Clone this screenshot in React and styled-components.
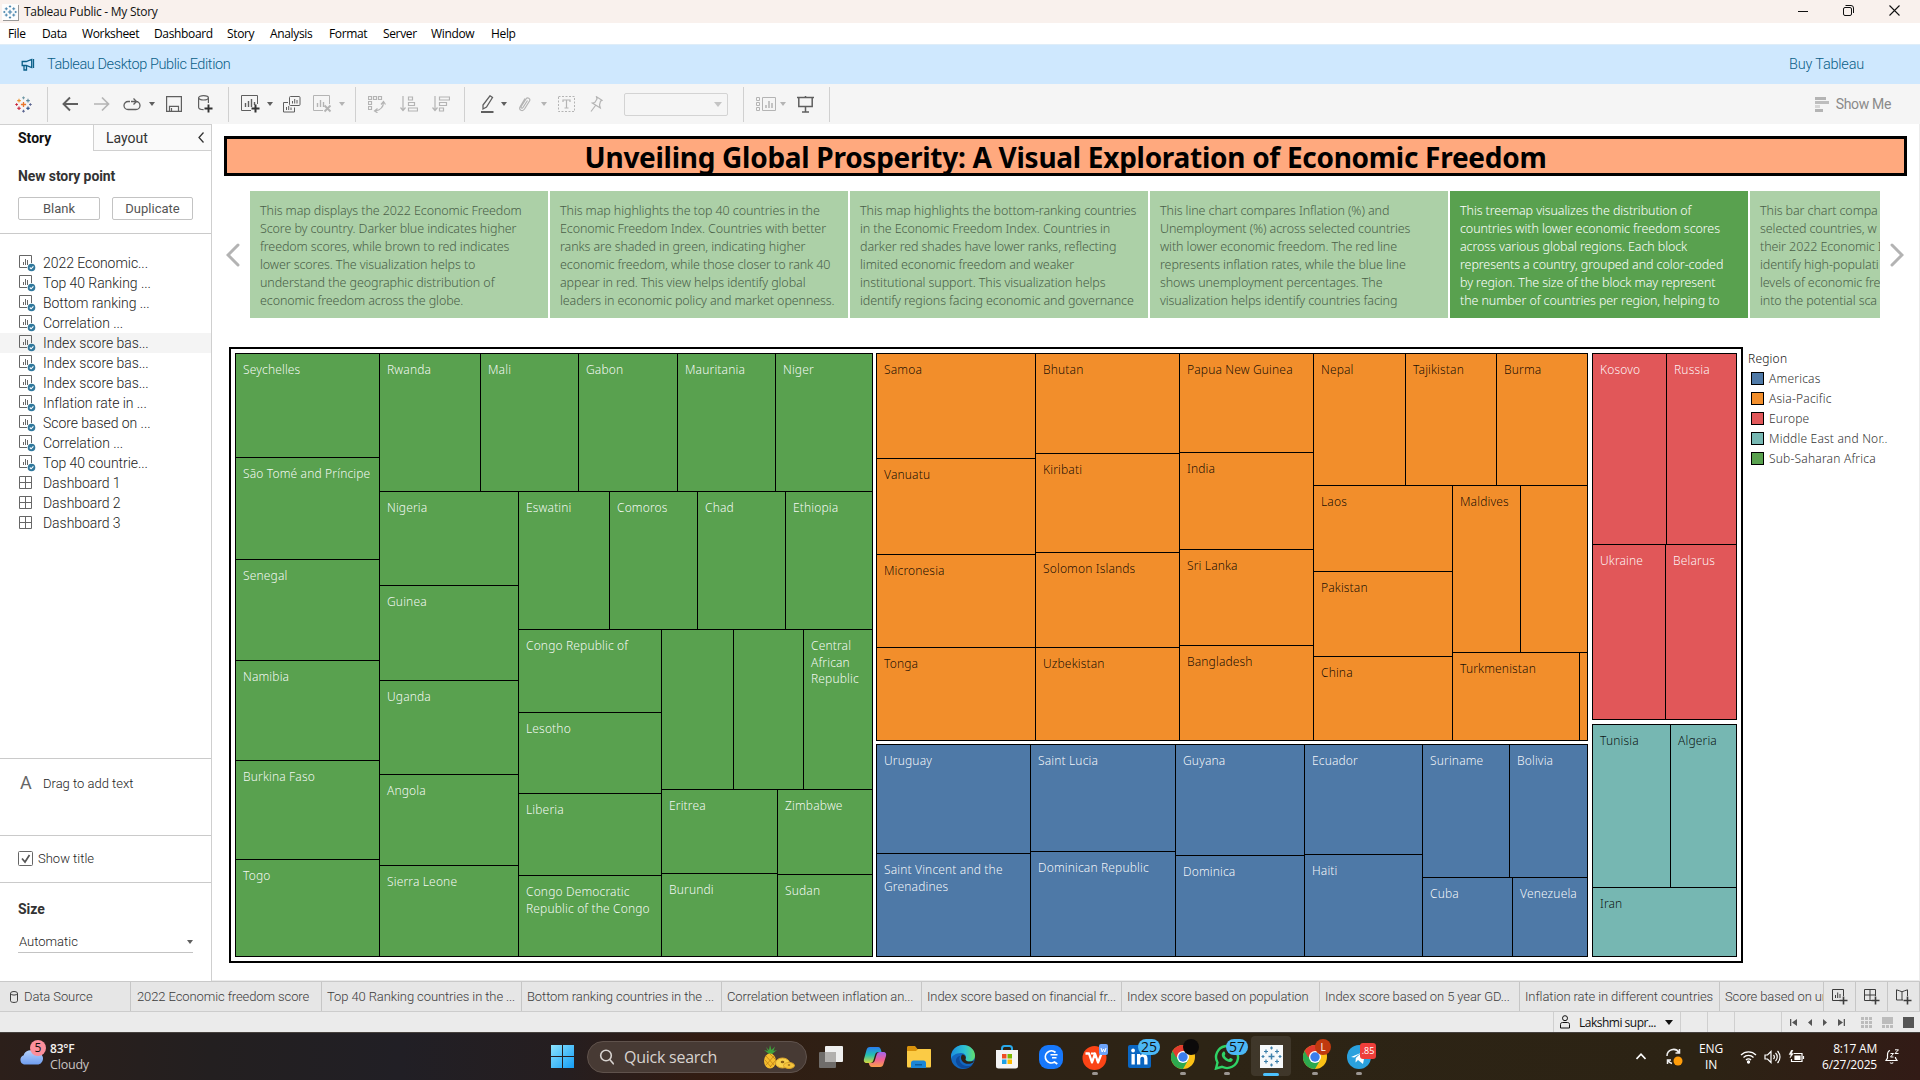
import React from "react";
import styled, { createGlobalStyle } from "styled-components";

const GlobalStyle = createGlobalStyle`
  * { box-sizing: border-box; }
  body { margin: 0; background: #fff; overflow: hidden; }
  svg { display: block; flex: none; }
`;

const UI = `Roboto, "Liberation Sans", sans-serif`;
const BOOK = `"Noto Sans", "Open Sans", sans-serif`;
const SEGOE = `"Open Sans", "Noto Sans", sans-serif`;

const C = {
  green: "#59a14f",
  orange: "#f28e2b",
  red: "#e15759",
  teal: "#76b7b2",
  blue: "#4e79a7",
};

/* ---------- window frame ---------- */

const Screen = styled.div`
  width: 1920px;
  height: 1080px;
  display: flex;
  flex-direction: column;
  overflow: hidden;
  font-family: ${UI};
  color: #333;
`;

const TitleBar = styled.header`
  height: 23px;
  flex: none;
  display: flex;
  align-items: center;
  background: #f9f1ed;
  padding: 0 20px 0 2px;
  font: 12px/22px ${SEGOE};
  letter-spacing: -0.27px;
  color: #111;
`;

const AppBadge = styled.span`
  width: 16px;
  height: 16px;
  background: #fdfdfd;
  box-shadow: 1px 1px 0 #999;
  margin-right: 6px;
  display: flex;
  align-items: center;
  justify-content: center;
`;

const WindowButtons = styled.div`
  margin-left: auto;
  display: flex;
  align-items: center;
  gap: 35px;
  padding-bottom: 2px;
`;

const MenuBar = styled.nav`
  height: 21px;
  flex: none;
  display: flex;
  gap: 16px;
  padding-left: 8px;
  font: 12px/21px ${SEGOE};
  color: #000;
  background: #fff;
`;

const MenuItem = styled.span`
  width: ${(p) => p.$w}px;
  letter-spacing: -0.35px;
  white-space: nowrap;
`;

const Banner = styled.div`
  height: 40px;
  flex: none;
  display: flex;
  align-items: center;
  background: #cfe8fe;
  border-top: 1px solid #dfedf8;
  padding: 0 56px 0 21px;
  font-size: 14.5px;
  font-weight: 300;
  color: #0a5f88;
`;

const BannerText = styled.span`
  margin-left: 12px;
  letter-spacing: -0.4px;
`;

const BuyLink = styled.span`
  margin-left: auto;
  letter-spacing: -0.2px;
`;

/* ---------- toolbar ---------- */

const Toolbar = styled.div`
  height: 40px;
  flex: none;
  display: flex;
  align-items: center;
  background: #f5f5f5;
  padding-right: 29px;
`;

const Tool = styled.span`
  margin-left: ${(p) => p.$gap}px;
  display: flex;
  color: ${(p) => (p.$off ? "#b4b4b4" : "#5f5f5f")};
`;

const Separator = styled.i`
  width: 1px;
  height: 35px;
  margin-left: ${(p) => p.$gap}px;
  background: #d0d0d0;
`;

const Caret = styled.i`
  margin-left: ${(p) => p.$gap || 0}px;
  width: 0;
  height: 0;
  flex: none;
  border: ${(p) => p.$s || 3}px solid transparent;
  border-top: ${(p) => (p.$s || 3) + 1}px solid ${(p) => p.$c || "#5f5f5f"};
  border-bottom: 0;
`;

const FitSelect = styled.span`
  margin-left: 21px;
  width: 104px;
  height: 23px;
  border: 1px solid #d3d3d3;
  border-radius: 2px;
  display: flex;
  align-items: center;
  justify-content: flex-end;
  padding-right: 5px;
`;

const ShowMe = styled.span`
  margin-left: auto;
  display: flex;
  align-items: center;
  gap: 6px;
  font-size: 14px;
  letter-spacing: -0.35px;
  color: #8a8a8a;
`;

/* ---------- body ---------- */

const Body = styled.div`
  height: 857px;
  flex: none;
  display: flex;
`;

const Sidebar = styled.aside`
  width: 212px;
  flex: none;
  border-right: 1px solid #cfcfcf;
  display: flex;
  flex-direction: column;
  font-size: 13px;
`;

const PaneTabs = styled.div`
  height: 27px;
  display: flex;
  font-size: 14px;
  line-height: 26px;
`;

const PaneTab = styled.div`
  width: ${(p) => (p.$active ? 93 : 118)}px;
  padding-left: ${(p) => (p.$active ? 18 : 12)}px;
  font-weight: ${(p) => (p.$active ? 700 : 400)};
  color: ${(p) => (p.$active ? "#111" : "#333")};
  border-top: 1px solid #d0d0d0;
  ${(p) =>
    !p.$active &&
    `background:#fafafa;border-left:1px solid #d0d0d0;border-bottom:1px solid #d0d0d0;
     display:flex;align-items:center;justify-content:space-between;padding-right:6px;`}
`;

const PaneSection = styled.section`
  height: ${(p) => p.$h}px;
  border-bottom: ${(p) => (p.$last ? 0 : 1)}px solid #cacaca;
  padding: ${(p) => p.$pad || "0 18px"};
`;

const PaneHeading = styled.h4`
  margin: 0;
  font-size: 14px;
  font-weight: 700;
  line-height: 18px;
  letter-spacing: ${(p) => p.$ls || 0}px;
  color: #333;
`;

const ButtonRow = styled.div`
  display: flex;
  gap: 12px;
  margin-top: 12px;
`;

const PaneButton = styled.button`
  width: ${(p) => p.$w}px;
  height: 23px;
  border: 1px solid #c3c3c3;
  border-radius: 2px;
  background: #fff;
  padding: 0 0 1px;
  font: 13px ${UI};
  color: #555;
`;

const SheetItem = styled.div`
  height: 20px;
  display: flex;
  align-items: center;
  gap: 7px;
  padding-left: 19px;
  background: ${(p) => (p.$active ? "#f4f4f4" : "none")};
  font-size: 14px;
  font-weight: 300;
  letter-spacing: -0.05px;
  color: #1c1c1c;
  white-space: pre;
`;

const TextRow = styled.div`
  display: flex;
  align-items: center;
  gap: ${(p) => p.$gap}px;
  letter-spacing: ${(p) => p.$ls || 0}px;
  font-weight: 300;
  color: #1c1c1c;
`;

const LetterIcon = styled.span`
  width: 12px;
  font-size: 18px;
  font-weight: 400;
  line-height: 20px;
  color: #666;
`;

const SizeSelect = styled.div`
  margin-top: 13px;
  width: 175px;
  height: 22px;
  border-bottom: 1px solid #c3c3c3;
  display: flex;
  align-items: center;
  justify-content: space-between;
  padding-left: 1px;
  font-weight: 300;
  color: #1c1c1c;
`;

/* ---------- story canvas ---------- */

const Canvas = styled.main`
  flex: 1;
  min-width: 0;
  display: flex;
  flex-direction: column;
  padding: 12px 12px 0 12px;
  border-right: 1px solid #ececec;
  border-bottom: 1px solid #ececec;
  font-family: ${BOOK};
`;

const StoryTitle = styled.h1`
  margin: 0;
  height: 40px;
  flex: none;
  border: 3px solid #000;
  border-width: 3px;
  background: #ffa97e;
  text-align: center;
  font-size: 28px;
  font-weight: 700;
  line-height: 36px;
  letter-spacing: -0.28px;
  color: #000;
  white-space: nowrap;
`;

const Navigator = styled.div`
  margin-top: 15px;
  height: 127px;
  flex: none;
  display: flex;
  align-items: center;
  padding: 0 3px 0 2px;
`;

const Captions = styled.div`
  margin: 0 10px 0 10px;
  width: 1630px;
  height: 127px;
  flex: none;
  display: flex;
  gap: 2px;
  overflow: hidden;
`;

const Caption = styled.p`
  margin: 0;
  width: 298px;
  flex: none;
  padding: 11px 0 0 10px;
  background: ${(p) => (p.$active ? C.green : "#acd0a7")};
  color: ${(p) => (p.$active ? "#fff" : "#4a5f48")};
  font-size: 12.5px;
  font-weight: 300;
  line-height: 18px;
  letter-spacing: -0.1px;
  white-space: pre;
`;

const Sheet = styled.div`
  margin: 29px 0 0 5px;
  display: flex;
`;

const VizFrame = styled.div`
  width: 1514px;
  height: 616px;
  border: 2px solid #000;
  padding: 4px;
  display: flex;
`;

const Column = styled.div`
  width: ${(p) => p.$w}px;
  margin-right: ${(p) => p.$mr || 0}px;
  display: flex;
  flex-direction: column;
  justify-content: space-between;
`;

const Region = styled.div`
  height: ${(p) => p.$h}px;
  padding: 1px;
  background: #000;
  display: flex;
  color: ${(p) => (p.$dark ? "rgba(0,0,0,.9)" : "rgba(255,255,255,.95)")};
`;

const Split = styled.div`
  flex: ${(p) => (p.$size ? `0 0 ${p.$size}px` : "1 1 0")};
  min-width: 0;
  min-height: 0;
  display: flex;
  flex-direction: ${(p) => (p.$dir === "V" ? "column" : "row")};
  gap: 1px;
`;

const Cell = styled.div`
  flex: ${(p) => (p.$size ? `0 0 ${p.$size}px` : "1 1 0")};
  min-width: 0;
  min-height: 0;
  background: ${(p) => p.$fill};
  padding: 8px 0 0 7px;
  font-size: 12px;
  font-weight: 300;
  line-height: 16.7px;
  letter-spacing: 0.15px;
  white-space: pre;
`;

const Legend = styled.div`
  padding: 3px 0 0 5px;
  font-size: 12px;
  font-weight: 300;
  letter-spacing: 0.2px;
  color: #333;
`;

const LegendTitle = styled.div`
  line-height: 18px;
  height: 18px;
  color: #111;
`;

const LegendRow = styled.div`
  height: 20px;
  display: flex;
  align-items: center;
  gap: 5px;
  padding-left: 3px;
`;

const Swatch = styled.i`
  width: 13px;
  height: 13px;
  border: 1px solid #000;
  background: ${(p) => p.$c};
`;

/* ---------- bottom tabs + status ---------- */

const TabBar = styled.div`
  height: 31px;
  flex: none;
  display: flex;
  border-top: 1px solid #c9c9c9;
  border-bottom: 1px solid #cccccc;
  background: #e6e6e6;
  font-size: 13px;
  font-weight: 300;
  color: #3c3c3c;
`;

const SheetTab = styled.div`
  width: ${(p) => p.$w}px;
  flex: none;
  border-right: 1px solid #c6c6c6;
  padding-left: ${(p) => p.$pl || 6}px;
  display: flex;
  align-items: center;
  gap: 6px;
  letter-spacing: -0.1px;
  white-space: nowrap;
  overflow: hidden;
`;

const NewTab = styled.div`
  width: 32px;
  border-right: 1px solid #c6c6c6;
  display: flex;
  align-items: center;
  justify-content: center;
`;

const StatusBar = styled.div`
  height: 20px;
  flex: none;
  display: flex;
  justify-content: flex-end;
  background: #ebebeb;
  font: 12px/19px ${SEGOE};
  color: #111;
`;

const StatusCell = styled.div`
  width: ${(p) => p.$w}px;
  border-left: 1px solid #cfcfcf;
  padding-left: ${(p) => p.$pl || 0}px;
  display: flex;
  align-items: center;
  gap: ${(p) => p.$gap || 0}px;
  letter-spacing: -0.5px;
`;

/* ---------- taskbar ---------- */

const Taskbar = styled.footer`
  height: 48px;
  flex: none;
  display: flex;
  align-items: center;
  border-top: 1px solid #45403d;
  background: linear-gradient(90deg, #2c1f1a 0, #231f20 210px, #211f25 400px, #251e20 560px, #321c12 700px, #2d2115 900px, #2d2415 1200px, #2c2314 1700px, #321b16 1920px);
  font-family: ${SEGOE};
  color: #f3f0ee;
`;

const Weather = styled.div`
  width: 551px;
  display: flex;
  align-items: center;
  padding-left: 19px;
  gap: 7px;
  font-size: 12px;
  line-height: 16px;
  letter-spacing: -0.2px;
`;

const CloudBox = styled.div`
  position: relative;
  width: 24px;
  height: 30px;
  display: flex;
  align-items: center;
`;

const Count = styled.span`
  position: absolute;
  top: ${(p) => p.$top}px;
  left: ${(p) => p.$left}px;
  min-width: 16px;
  height: 16px;
  padding: 0 ${(p) => p.$px || 0}px;
  border-radius: ${(p) => (p.$square ? 3 : 9)}px;
  background: ${(p) => p.$bg};
  color: ${(p) => p.$fg || "#111"};
  font: ${(p) => p.$fs || 12}px/16px ${SEGOE};
  letter-spacing: 0;
  text-align: center;
`;

const WeatherText = styled.div`
  span { display: block; color: #c9c4c2; font-size: 12.5px; }
  b { font-weight: 600; font-size: 12px; }
`;

const SearchPill = styled.div`
  margin-left: 13px;
  width: 220px;
  height: 32px;
  border-radius: 16px;
  border: 1px solid #5f524c;
  background: #473a34;
  display: flex;
  align-items: center;
  padding: 0 11px;
  gap: 10px;
  font-size: 16px;
  letter-spacing: -0.25px;
  color: #d8d3d0;
  svg:last-child { margin-left: auto; }
`;

const Apps = styled.div`
  margin-left: 2px;
  display: flex;
`;

const AppSlot = styled.div`
  position: relative;
  width: 44px;
  height: 47px;
  display: flex;
  align-items: center;
  justify-content: center;
  ${(p) =>
    p.$active &&
    `&::before{content:"";position:absolute;inset:3px 2px 4px;border-radius:4px;background:rgba(255,255,255,.09);}`}
  ${(p) =>
    p.$running &&
    `&::after{content:"";position:absolute;bottom:${p.$active ? 4 : 5}px;left:50%;
      width:${p.$active ? 16 : 6}px;height:3px;border-radius:2px;transform:translateX(-50%);
      background:${p.$active ? "#4cc2ff" : "#9b9692"};}`}
  svg { position: relative; }
`;

const Tray = styled.div`
  margin-left: auto;
  padding-right: 21px;
  display: flex;
  align-items: center;
  font-size: 12px;
  line-height: 16px;
  color: #fff;
`;

const TrayText = styled.div`
  width: ${(p) => p.$w}px;
  text-align: ${(p) => p.$align || "center"};
  letter-spacing: -0.2px;
`;

const TrayIcon = styled.span`
  margin-left: ${(p) => p.$gap}px;
`;

/* ---------- icons ---------- */

const S = ({ w = 16, h = w, sw = 1, children, vb }) => (
  <svg width={w} height={h} viewBox={vb || `0 0 ${w} ${h}`} fill="none" stroke="currentColor" strokeWidth={sw}>
    {children}
  </svg>
);

const plus = (x, y, r) => `M${x - r} ${y}h${2 * r}M${x} ${y - r}v${2 * r}`;

const TableauMark = ({ size = 17, mono }) => {
  const c = mono
    ? Array(9).fill("#3f7ea8")
    : ["#e8762c", "#c72037", "#1f457e", "#5b6591", "#eb912c", "#59879b", "#7199a6", "#c72037", "#5b6591"];
  return (
    <svg width={size} height={size} viewBox="0 0 17 17" fill="none" strokeWidth="1.1">
      <path d={plus(8.5, 8.5, 2.6)} stroke={c[0]} strokeWidth="1.3" />
      <path d={plus(4, 12.2, 1.8)} stroke={c[1]} />
      <path d={plus(13, 12.2, 1.8)} stroke={c[2]} />
      <path d={plus(4, 4.6, 1.8)} stroke={c[4]} />
      <path d={plus(13, 4.6, 1.8)} stroke={c[5]} />
      <path d={plus(8.5, 1.8, 1.4)} stroke={c[6]} />
      <path d={plus(8.5, 15.2, 1.4)} stroke={c[8]} />
      <path d={plus(1.6, 8.5, 1.3)} stroke={c[7]} />
      <path d={plus(15.4, 8.5, 1.3)} stroke={c[3]} />
    </svg>
  );
};

const Megaphone = () => (
  <S w={14} h={13} sw={1.3}>
    <path d="M1.200 3.500h4l5.500-2v8l-5.500-2h-4zM3 7.500v4.500h2.500V7.500M12.500 1v9" />
  </S>
);

const NewSheetIcon = () => (
  <S w={19} h={18}>
    <path d="M10 15.500H.5V.5h16V9" />
    <path d="M4.500 12V8M7.500 12V6M10.500 12V4M13.500 10V7" strokeWidth="1.400" />
    <path d={plus(14.5, 13.5, 4)} strokeWidth="2" stroke="#333" />
  </S>
);
const ClearSheetIcon = () => (
  <S w={19} h={18}>
    <path d="M10 15.500H.5V.5h16V9" />
    <path d="M4.500 12V8M7.500 12V5M10.500 12V7" strokeWidth="1.400" />
    <path d="M11.500 10.500l6 6M17.500 10.500l-6 6" strokeWidth="1.900" />
  </S>
);
const DuplicateIcon = () => (
  <S w={18} h={17}>
    <rect x="6.500" y=".5" width="10.500" height="9" rx="1" />
    <path d="M9.500 7.500V5M11.700 7.500V3M14 7.500V4" />
    <path d="M5 6.500H.5V16h11v-4.500" />
    <path d="M3.500 14v-3M5.700 14v-4M8 14v-2.500" />
  </S>
);
const SwapIcon = () => (
  <S w={18} h={17} sw={1.2}>
    <path d="M.5.5h3v3h-3zM5.500.5h3v3h-3zM10.500.5h3v3h-3zM.5 5.500h3v3h-3zM.5 10.500h3v3h-3z" />
    <path d="M15.500 6c0 5-2.500 8-8.500 9M13 8.500L15.500 5.500 17.500 8.500M9.500 12.500L6.500 15l3 1.800" />
  </S>
);
const SortIcon = ({ asc }) => (
  <S w={18} h={16} sw={1.2}>
    <path d="M3 0v14M.5 11.500L3 14.500 5.500 11.500" />
    {asc ? (
      <path d="M8.500 1h4v3h-4zM8.500 6.500h6v3h-6zM8.500 12h9v3h-9z" />
    ) : (
      <path d="M7.500 1h10v3h-10zM7.500 6.500h7v3h-7zM7.500 12h4v3h-4z" />
    )}
  </S>
);
const Pen = () => (
  <S w={13} h={18}>
    <path d="M9 .8l2.500 1.700L5.500 12 2 14V10z" strokeWidth="1.300" />
    <path d="M0 17h12.500" strokeWidth="2" />
  </S>
);
const Clip = () => (
  <S w={13} h={16}>
    <path d="M9.500 4.500L5 11.500c-.8 1.200-2.500.2-1.800-1L8 3c1.500-2.300 4.800-.5 3.500 2L6.500 13c-2 3-6 1-4.500-2l5-8.500" strokeWidth="1.200" />
  </S>
);
const TextBox = () => (
  <S w={17} h={16}>
    <rect x=".5" y=".5" width="16" height="15" strokeDasharray="2 1.500" />
    <path d="M5 6V4h7v2M8.500 4v8M6.500 12h4" strokeWidth="1.200" />
  </S>
);
const Pin = () => (
  <S w={13} h={16}>
    <path d="M6.500.8l5.500 3.500-1.500.8L9.500 9l.8 3-8-5 2.500-.5L7 3zM5.500 9.500L1 15.500" strokeWidth="1.200" />
  </S>
);
const CardsIcon = () => (
  <S w={20} h={14}>
    <path d="M.5.5h3v3h-3zM.5 5.500h3v3h-3zM.5 10.500h3v3h-3zM6.500.5h13v13h-13z" />
    <path d="M10 11V8M13 11V4M16 11V6" strokeWidth="1.500" />
  </S>
);
const Present = () => (
  <S w={17} h={17} sw={1.5}>
    <path d="M0 1.500h17M1.800 1.500v9h13.400v-9M8.500 0v1M8.500 10.500V16M5 16h7" />
  </S>
);

const SheetIcon = () => (
  <svg width="17" height="17" viewBox="0 0 17 17" fill="none" stroke="#666">
    <path d="M8 12.500H.5V.5h12V8" />
    <path d="M4.500 10V7M6.500 10V4M8.500 10V5" />
    <circle cx="12.500" cy="12.500" r="3.800" fill="#31789c" stroke="none" />
    <path d="M10.800 12.500l1.300 1.300 2.300-2.500" stroke="#fff" strokeWidth="1.100" />
  </svg>
);
const DashIcon = () => (
  <svg width="17" height="16" viewBox="0 0 17 16" fill="none" stroke="#666">
    <path d="M.5 1.500h12v12H.5zM6.500 1.500v12M.5 7.500h12" />
  </svg>
);

const Chevron = ({ right }) => (
  <svg width="14" height="24" viewBox="0 0 14 24" fill="none" stroke="#b3b3b3" strokeWidth="3" strokeLinecap="round">
    <path d={right ? "M2 2l10 10L2 22" : "M12 2L2 12l10 10"} />
  </svg>
);

const Cloud = () => (
  <svg width="24" height="16" viewBox="0 0 24 16">
    <defs>
      <linearGradient id="cl" x1="0" y1="0" x2="0" y2="1">
        <stop offset="0" stopColor="#b6d2fb" />
        <stop offset="1" stopColor="#6f9df0" />
      </linearGradient>
    </defs>
    <path d="M5 15.500a4.800 4.800 0 0 1-.3-9.200A6.500 6.500 0 0 1 16 3.500a6 6 0 0 1 3.500 12z" fill="url(#cl)" />
  </svg>
);

const WinLogo = () => (
  <svg width="23" height="23" viewBox="0 0 23 23">
    <defs>
      <linearGradient id="wl" x1="0" y1="0" x2="1" y2="1">
        <stop offset="0" stopColor="#8be4fe" />
        <stop offset="1" stopColor="#149df5" />
      </linearGradient>
    </defs>
    <path d="M0 0h11v11H0zM12 0h11v11H12zM0 12h11v11H0zM12 12h11v11H12z" fill="url(#wl)" />
  </svg>
);

const Pineapple = () => (
  <svg width="32" height="24" viewBox="0 0 32 24">
    <path d="M6 9L1 5l4 1-2-4 3 3L7 0l1.500 5L12 1.500 10.500 6 14 5 9 9z" fill="#3fa13c" />
    <ellipse cx="7" cy="16" rx="6" ry="7.500" fill="#f5bd2d" />
    <path d="M3 11l8 9M2 15l6 7M7 9l6 6M11 11l-8 9M13 15l-6 7" stroke="#b97a12" strokeWidth=".7" />
    <ellipse cx="19.500" cy="18" rx="7" ry="5" fill="#f9d04a" stroke="#d9a22a" />
    <ellipse cx="19.500" cy="17" rx="1.800" ry="1.200" fill="#8a5f16" />
    <ellipse cx="26" cy="20.500" rx="5.500" ry="3" fill="#f6c53c" stroke="#d9a22a" />
    <ellipse cx="26" cy="20" rx="1.300" ry=".8" fill="#8a5f16" />
  </svg>
);

const TaskView = () => (
  <svg width="24" height="22" viewBox="0 0 24 22">
    <rect x="6" y="0" width="18" height="16" rx="1" fill="#efefef" />
    <rect x="0" y="6" width="17" height="16" rx="1" fill="#6f6c6a" />
    <path d="M6 6h11v10H6z" fill="#b2b0ae" />
  </svg>
);

const Copilot = () => (
  <svg width="24" height="24" viewBox="0 0 24 24">
    <defs>
      <linearGradient id="cp1" x1="0" y1="0" x2="0" y2="1">
        <stop offset="0" stopColor="#2a7cf0" />
        <stop offset=".5" stopColor="#24c0b0" />
        <stop offset="1" stopColor="#d7d83a" />
      </linearGradient>
      <linearGradient id="cp2" x1="0" y1="0" x2="0" y2="1">
        <stop offset="0" stopColor="#a066f0" />
        <stop offset=".5" stopColor="#ee5f96" />
        <stop offset="1" stopColor="#f9a04a" />
      </linearGradient>
    </defs>
    <path d="M7 2h8c2 0 2.500 1.500 3 3l.5 2h-3c-2 0-3 1-3.500 3l-1.500 5c-.6 2-1.500 3-3.500 3H4c-3 0-3.500-2-3-4L3.500 5C4 3 5 2 7 2z" fill="url(#cp1)" />
    <path d="M17 22H9c-2 0-2.500-1.500-3-3l-.3-1h2.800c2 0 3-1 3.500-3l1.500-5c.6-2 1.500-3 3.500-3h3c3 0 3.500 2 3 4l-2.500 8c-.500 2-1.500 3-3.500 3z" fill="url(#cp2)" />
  </svg>
);

const Folder = () => (
  <svg width="24" height="22" viewBox="0 0 24 22">
    <path d="M0 1.500C0 .7.500 0 1.500 0H8l2.500 3H24v4H0z" fill="#d9920c" />
    <path d="M0 5h9l2-2h11.500c1 0 1.500.6 1.500 1.500V20c0 1-.5 1.500-1.500 1.500h-21C.5 21.500 0 21 0 20z" fill="#fbcb45" />
    <path d="M4 22v-5c0-1.500 1-2.500 2.500-2.500h10c1.500 0 2.500 1 2.500 2.500v5z" fill="#1b86d8" />
    <path d="M8 18h7v1.500H8z" fill="#0c5c9f" />
  </svg>
);

const Edge = () => (
  <svg width="24" height="24" viewBox="0 0 24 24">
    <defs>
      <linearGradient id="eg" x1="0" y1="0" x2="1" y2="0">
        <stop offset="0" stopColor="#1b8fe0" />
        <stop offset=".6" stopColor="#2fc3d0" />
        <stop offset="1" stopColor="#63e06a" />
      </linearGradient>
    </defs>
    <circle cx="12" cy="12" r="12" fill="#1267c0" />
    <path d="M0 12C0 5 5.500 0 12 0c7 0 12 5 12 10.500 0 4-3 6-6 6s-4.500-1-3.500-2.500c1.500-2.500-.5-6-4.500-6-5 0-9.500 3-10 6z" fill="url(#eg)" />
    <path d="M9 11c-2 4 1 10 8 10 2 0 3.500-.5 5-1.500C19 24 8 26 5 17c-.6-3 1.500-6 4-6z" fill="#0d4a9b" />
    <path d="M11.500 9.500c-2 1-2.500 6 2 8.500 3 1.500 6.500.8 8.500-.500l1-2c-3 2-9 1-8.500-1.500.9-1.500 0-4-3-4.500z" fill="#2d2114" />
  </svg>
);

const Store = () => (
  <svg width="24" height="24" viewBox="0 0 24 24">
    <path d="M7 6V3.500C7 2 7.800 1 9.500 1h5C16.200 1 17 2 17 3.500V6" fill="none" stroke="#29a9ea" strokeWidth="2" />
    <path d="M1 5h22v16c0 1.800-.9 2.500-2.500 2.500h-17C1.900 23.500 1 22.800 1 21z" fill="#f4f4f4" />
    <path d="M7 9h4.500v4.500H7z" fill="#f04e23" />
    <path d="M12.500 9H17v4.500h-4.500z" fill="#7cb900" />
    <path d="M7 14.500h4.500V19H7z" fill="#1ba1e8" />
    <path d="M12.500 14.500H17V19h-4.500z" fill="#fdb900" />
  </svg>
);

const QuickApp = () => (
  <svg width="24" height="24" viewBox="0 0 24 24">
    <rect width="24" height="24" rx="9" fill="#1778fb" />
    <path d="M16.500 7.500A6 6 0 1 0 15.500 17l2.800 2" fill="none" stroke="#fff" strokeWidth="1.800" />
    <path d="M11.500 9.700h7M13 12.700h4.500" fill="none" stroke="#fff" strokeWidth="1.500" />
  </svg>
);

const Wps = () => (
  <svg width="28" height="28" viewBox="0 0 28 28">
    <circle cx="13.500" cy="15" r="12" fill="#fb4416" />
    <path d="M4.500 10.500h3.500l3 9 3-9 3 9 3.500-9" fill="none" stroke="#fff" strokeWidth="2.300" strokeLinejoin="round" />
    <path d="M10 10.500h4" stroke="#fff" strokeWidth="2" />
    <rect x="18" y="1" width="9" height="11" rx="2" fill="#6ca3f8" />
    <path d="M20 5l1.200 4 1.300-3 1.300 3L25 5" fill="none" stroke="#fff" />
  </svg>
);

const LinkedIn = () => (
  <svg width="23" height="23" viewBox="0 0 23 23">
    <rect width="23" height="23" rx="2" fill="#0a66c2" />
    <path d="M3.500 9h3.300v10.500H3.500zM9 9h3.200v1.500c1.500-2.500 7.300-2.500 7.300 2.800v6.200h-3.300v-5.500c0-3-3.900-2.800-3.900 0v5.500H9z" fill="#fff" />
    <circle cx="5.100" cy="5.500" r="1.900" fill="#fff" />
  </svg>
);

const Chrome = () => (
  <svg width="24" height="24" viewBox="0 0 24 24">
    <circle cx="12" cy="12" r="12" fill="#fbc116" />
    <path d="M12 12L1.600 6A12 12 0 0 0 12 24l5.200-9z" fill="#2da94f" />
    <path d="M1.600 6A12 12 0 0 1 22.400 6H12v6H5z" fill="#e33b2e" />
    <circle cx="12" cy="12" r="6" fill="#fff" />
    <circle cx="12" cy="12" r="4.700" fill="#3b7ded" />
  </svg>
);

const WhatsApp = () => (
  <svg width="26" height="26" viewBox="0 0 26 26">
    <path d="M2 24.500l1.500-6A11 11 0 1 1 8 22.800z" fill="#2c2415" stroke="#2fd366" strokeWidth="2.400" />
    <path d="M9 8c1-1 1.800-.5 2.300 1.500.3 1-.8 1.500-.5 2.300.8 1.700 2 2.700 3.700 3.500.8.200 1.200-1.300 2-1.200 2 .8 2.800 1 2 2.500-2 3-6 1-8.500-1.500S7 9.800 9 8z" fill="#2fd366" />
  </svg>
);

const Telegram = () => (
  <svg width="24" height="24" viewBox="0 0 24 24">
    <circle cx="12" cy="12" r="12" fill="#2aa1de" />
    <path d="M4 12l14.500-6-2.500 13-5-4-2.500 2.500.3-4.500 6-5.500-7.500 5z" fill="#fff" />
  </svg>
);

const TableauApp = () => (
  <svg width="23" height="23" viewBox="0 0 23 23">
    <rect width="23" height="23" fill="#f6f9fb" />
    <g stroke="#3d80ab" strokeWidth="1.200">
      <path d={plus(11.5, 11.5, 3)} strokeWidth="1.500" />
      <path d={plus(6, 6.5, 2)} />
      <path d={plus(17, 6.5, 2)} />
      <path d={plus(6, 16.5, 2)} />
      <path d={plus(17, 16.5, 2)} />
      <path d={plus(11.5, 3, 1.5)} />
      <path d={plus(11.5, 20, 1.5)} />
      <path d={plus(3, 11.5, 1.5)} />
      <path d={plus(20, 11.5, 1.5)} />
    </g>
  </svg>
);

/* ---------- data ---------- */

const menus = [
  ["File", 18], ["Data", 24], ["Worksheet", 56], ["Dashboard", 57], ["Story", 27],
  ["Analysis", 43], ["Format", 38], ["Server", 32], ["Window", 44], ["Help", 26],
];

const sheets = [
  "2022 Economic...", "Top 40 Ranking ...", "Bottom ranking ...", "Correlation ...", "Index score bas...",
  "Index score bas...", "Index score bas...", "Inflation rate in ...", "Score based on ...", "Correlation ...",
  "Top 40 countrie...", "Dashboard 1", "Dashboard 2", "Dashboard 3",
];

const captions = [
  "This map displays the 2022 Economic Freedom\nScore by country. Darker blue indicates higher\nfreedom scores, while brown to red indicates\nlower scores. The visualization helps to\nunderstand the geographic distribution of\neconomic freedom across the globe.",
  "This map highlights the top 40 countries in the\nEconomic Freedom Index. Countries with better\nranks are shaded in green, indicating higher\neconomic freedom, while those closer to rank 40\nappear in red. This view helps identify global\nleaders in economic policy and market openness.",
  "This map highlights the bottom-ranking countries\nin the Economic Freedom Index. Countries in\ndarker red shades have lower ranks, reflecting\nlimited economic freedom and weaker\ninstitutional support. This visualization helps\nidentify regions facing economic and governance",
  "This line chart compares Inflation (%) and\nUnemployment (%) across selected countries\nwith lower economic freedom. The red line\nrepresents inflation rates, while the blue line\nshows unemployment percentages. The\nvisualization helps identify countries facing",
  "This treemap visualizes the distribution of\ncountries with lower economic freedom scores\nacross various global regions. Each block\nrepresents a country, grouped and color-coded\nby region. The size of the block may represent\nthe number of countries per region, helping to",
  "This bar chart compa\nselected countries, w\ntheir 2022 Economic I\nidentify high-populati\nlevels of economic fre\ninto the potential sca",
];

// A node is [size, label] for a leaf or [size, direction, children] for a split; size 0 fills the rest.
const africa = [0, "H", [
  [143, "V", [[103, "Seychelles"], [101, "São Tomé and Príncipe"], [100, "Senegal"], [99, "Namibia"], [98, "Burkina Faso"], [0, "Togo"]]],
  [0, "V", [
    [137, "H", [[100, "Rwanda"], [97, "Mali"], [98, "Gabon"], [97, "Mauritania"], [0, "Niger"]]],
    [0, "H", [
      [138, "V", [[93, "Nigeria"], [94, "Guinea"], [93, "Uganda"], [90, "Angola"], [0, "Sierra Leone"]]],
      [0, "V", [
        [137, "H", [[90, "Eswatini"], [87, "Comoros"], [87, "Chad"], [0, "Ethiopia"]]],
        [0, "H", [
          [142, "V", [[82, "Congo Republic of"], [80, "Lesotho"], [81, "Liberia"], [0, "Congo Democratic\nRepublic of the Congo"]]],
          [0, "V", [
            [159, "H", [[71, ""], [69, ""], [0, "Central\nAfrican\nRepublic"]]],
            [0, "H", [
              [115, "V", [[83, "Eritrea"], [0, "Burundi"]]],
              [0, "V", [[84, "Zimbabwe"], [0, "Sudan"]]],
            ]],
          ]],
        ]],
      ]],
    ]],
  ]],
]];

const asia = [0, "H", [
  [158, "V", [[104, "Samoa"], [95, "Vanuatu"], [92, "Micronesia"], [0, "Tonga"]]],
  [143, "V", [[99, "Bhutan"], [98, "Kiribati"], [94, "Solomon Islands"], [0, "Uzbekistan"]]],
  [133, "V", [[98, "Papua New Guinea"], [96, "India"], [95, "Sri Lanka"], [0, "Bangladesh"]]],
  [0, "V", [
    [131, "H", [[91, "Nepal"], [90, "Tajikistan"], [0, "Burma"]]],
    [0, "H", [
      [138, "V", [[85, "Laos"], [84, "Pakistan"], [0, "China"]]],
      [0, "V", [
        [166, "H", [[67, "Maldives"], [0, ""]]],
        [0, "H", [[126, "Turkmenistan"], [0, ""]]],
      ]],
    ]],
  ]],
]];

const americas = [0, "H", [
  [153, "V", [[108, "Uruguay"], [0, "Saint Vincent and the\nGrenadines"]]],
  [144, "V", [[106, "Saint Lucia"], [0, "Dominican Republic"]]],
  [128, "V", [[110, "Guyana"], [0, "Dominica"]]],
  [117, "V", [[109, "Ecuador"], [0, "Haiti"]]],
  [0, "V", [
    [132, "H", [[86, "Suriname"], [0, "Bolivia"]]],
    [0, "H", [[89, "Cuba"], [0, "Venezuela"]]],
  ]],
]];

const europe = [0, "V", [
  [190, "H", [[73, "Kosovo"], [0, "Russia"]]],
  [0, "H", [[72, "Ukraine"], [0, "Belarus"]]],
]];

const mena = [0, "V", [
  [162, "H", [[77, "Tunisia"], [0, "Algeria"]]],
  [0, "Iran"],
]];

const legend = [
  ["Americas", C.blue], ["Asia-Pacific", C.orange], ["Europe", C.red],
  ["Middle East and Nor..", C.teal], ["Sub-Saharan Africa", C.green],
];

const tabs = [
  ["2022 Economic freedom score", 191], ["Top 40 Ranking countries in the ...", 200],
  ["Bottom ranking countries in the ...", 200], ["Correlation between inflation an...", 200],
  ["Index score based on financial fr...", 200], ["Index score based on population", 198],
  ["Index score based on 5 year GD...", 200], ["Inflation rate in different countries", 200],
  ["Score based on ur", 104],
];

const Tree = ({ node, fill }) => {
  const [size, kind, kids] = node;
  if (!kids) return <Cell $size={size} $fill={fill}>{kind}</Cell>;
  return (
    <Split $size={size} $dir={kind}>
      {kids.map((k, i) => <Tree key={i} node={k} fill={fill} />)}
    </Split>
  );
};

const OFF = "#b4b4b4";

export default function App() {
  return (
    <Screen>
      <GlobalStyle />
      <TitleBar>
        <AppBadge><TableauMark size={14} mono /></AppBadge>
        Tableau Public - My Story
        <WindowButtons>
          <S w={10}><path d="M0 5.500h10" /></S>
          <S w={11}>
            <rect x=".5" y="2.500" width="8" height="8" rx="1.500" />
            <path d="M2.500.5h5.500a2.500 2.500 0 0 1 2.500 2.500v5" />
          </S>
          <S w={11}><path d="M.5.5l10 10M10.500.5l-10 10" strokeWidth="1.100" /></S>
        </WindowButtons>
      </TitleBar>
      <MenuBar>{menus.map(([m, w]) => <MenuItem key={m} $w={w}>{m}</MenuItem>)}</MenuBar>
      <Banner>
        <Megaphone />
        <BannerText>Tableau Desktop Public Edition</BannerText>
        <BuyLink>Buy Tableau</BuyLink>
      </Banner>
      <Toolbar>
        <Tool $gap={15}><TableauMark /></Tool>
        <Separator $gap={15} />
        <Tool $gap={14}><S w={16} sw={1.9}><path d="M8 1.500L1.500 8 8 14.500M1.500 8H16" /></S></Tool>
        <Tool $gap={16} $off><S w={16} sw={1.7}><path d="M8 1.500L14.500 8 8 14.500M14.500 8H0" /></S></Tool>
        <Tool $gap={13}>
          <S w={18} h={13} sw={1.3}>
            <path d="M7 3.500H5a4 4 0 0 0 0 8h8a4 4 0 0 0 0-8H8M10.500.5l3 3-3 3" />
          </S>
        </Tool>
        <Caret $gap={8} />
        <Tool $gap={11}>
          <S w={16} sw={1.2}><path d="M.6.6h14.800v14.800H.6zM3.500 15.400v-5h9v5M5.500 12v3.400" /></S>
        </Tool>
        <Tool $gap={16}>
          <S w={15} h={18} sw={1.2}>
            <ellipse cx="5.500" cy="2.800" rx="4.900" ry="2.200" />
            <path d="M.6 2.800v9.500c0 1.500 2 2.400 5 2.400M10.400 2.800V8" />
            <path d={plus(10.5, 13.5, 4)} strokeWidth="1.900" stroke="#333" />
          </S>
        </Tool>
        <Separator $gap={15} />
        <Tool $gap={12}><NewSheetIcon /></Tool>
        <Caret $gap={7} />
        <Tool $gap={10}><DuplicateIcon /></Tool>
        <Tool $gap={12} $off><ClearSheetIcon /></Tool>
        <Caret $gap={7} $c={OFF} />
        <Separator $gap={10} />
        <Tool $gap={12} $off><SwapIcon /></Tool>
        <Tool $gap={14} $off><SortIcon asc /></Tool>
        <Tool $gap={14} $off><SortIcon /></Tool>
        <Separator $gap={14} />
        <Tool $gap={16}><Pen /></Tool>
        <Caret $gap={7} />
        <Tool $gap={11} $off><Clip /></Tool>
        <Caret $gap={10} $c={OFF} />
        <Tool $gap={11} $off><TextBox /></Tool>
        <Tool $gap={15} $off><Pin /></Tool>
        <FitSelect><Caret $s={4} $c="#c4c4c4" /></FitSelect>
        <Separator $gap={15} />
        <Tool $gap={12} $off><CardsIcon /></Tool>
        <Caret $gap={4} $c={OFF} />
        <Tool $gap={11}><Present /></Tool>
        <Separator $gap={15} />
        <ShowMe>
          <svg width="15" height="15" viewBox="0 0 15 15">
            <path d="M0 0h11v3H0zM0 12h8v3H0z" fill="#b4b4b4" />
            <path d="M0 4h14v3H0z" fill="#bdbdbd" />
            <path d="M0 8h5v3H0z" fill="#d6d6d6" />
          </svg>
          Show Me
        </ShowMe>
      </Toolbar>

      <Body>
        <Sidebar>
          <PaneTabs>
            <PaneTab $active>Story</PaneTab>
            <PaneTab>
              Layout
              <S w={7} h={11} sw={1.3}><path d="M5.500.5L1 5.500l4.500 5" /></S>
            </PaneTab>
          </PaneTabs>
          <PaneSection $h={83} $pad="16px 18px 0">
            <PaneHeading $ls={-0.1}>New story point</PaneHeading>
            <ButtonRow>
              <PaneButton $w={82}>Blank</PaneButton>
              <PaneButton $w={81}>Duplicate</PaneButton>
            </ButtonRow>
          </PaneSection>
          <PaneSection $h={525} $pad="19px 0 0">
            {sheets.map((s, i) => (
              <SheetItem key={i} $active={i === 4}>
                {i < 11 ? <SheetIcon /> : <DashIcon />}
                {s}
              </SheetItem>
            ))}
          </PaneSection>
          <PaneSection $h={77} $pad="14px 20px 0">
            <TextRow $gap={11}><LetterIcon>A</LetterIcon>Drag to add text</TextRow>
          </PaneSection>
          <PaneSection $h={47} $pad="15px 18px 0">
            <TextRow $gap={5}>
              <S w={15}>
                <rect x=".5" y=".5" width="14" height="14" rx="1" stroke="#666" />
                <path d="M4 7.500l3 3.500 4.500-7" stroke="#555" strokeWidth="1.700" />
              </S>
              Show title
            </TextRow>
          </PaneSection>
          <PaneSection $h={98} $last $pad="17px 18px 0">
            <PaneHeading>Size</PaneHeading>
            <SizeSelect>Automatic<Caret /></SizeSelect>
          </PaneSection>
        </Sidebar>

        <Canvas>
          <StoryTitle>Unveiling Global Prosperity: A Visual Exploration of Economic Freedom</StoryTitle>
          <Navigator>
            <Chevron />
            <Captions>
              {captions.map((c, i) => <Caption key={i} $active={i === 4}>{c}</Caption>)}
            </Captions>
            <Chevron right />
          </Navigator>
          <Sheet>
            <VizFrame>
              <Column $w={638} $mr={3}>
                <Region $h={604}><Tree node={africa} fill={C.green} /></Region>
              </Column>
              <Column $w={712} $mr={4}>
                <Region $h={388} $dark><Tree node={asia} fill={C.orange} /></Region>
                <Region $h={213}><Tree node={americas} fill={C.blue} /></Region>
              </Column>
              <Column $w={145}>
                <Region $h={367}><Tree node={europe} fill={C.red} /></Region>
                <Region $h={233} $dark><Tree node={mena} fill={C.teal} /></Region>
              </Column>
            </VizFrame>
            <Legend>
              <LegendTitle>Region</LegendTitle>
              {legend.map(([t, c]) => <LegendRow key={t}><Swatch $c={c} />{t}</LegendRow>)}
            </Legend>
          </Sheet>
        </Canvas>
      </Body>

      <TabBar>
        <SheetTab $w={131} $pl={10}>
          <S w={8} h={12}>
            <ellipse cx="4" cy="2.300" rx="3.500" ry="1.800" />
            <path d="M.5 2.300v7.500c0 2.200 7 2.200 7 0V2.300" />
          </S>
          Data Source
        </SheetTab>
        {tabs.map(([t, w], i) => <SheetTab key={t} $w={w} $pl={i ? 5 : 6}>{t}</SheetTab>)}
        <NewTab>
          <S w={16}>
            <path d="M8 11.500H.5V.5h11V7M3.500 9V6M5.700 9V3.500M8 9V5" />
            <path d={plus(11.5, 11.5, 4)} strokeWidth="1.600" />
          </S>
        </NewTab>
        <NewTab>
          <S w={16}>
            <path d="M8 11.500H.5V.5h11V7M6 .5v11M.5 6h11" />
            <path d={plus(11.5, 11.5, 4)} strokeWidth="1.600" />
          </S>
        </NewTab>
        <NewTab>
          <S w={16}>
            <path d="M7 11H.5V.8l3 1 2.500 1 2.500-1 3-1V7M6 3v8" />
            <path d={plus(11.5, 11.5, 4)} strokeWidth="1.600" />
          </S>
        </NewTab>
      </TabBar>
      <StatusBar>
        <StatusCell $w={127} $pl={6} $gap={9}>
          <S w={10} h={14}>
            <circle cx="5" cy="3.200" r="2.500" />
            <path d="M.5 13V9.500c0-1.500 1-2 2-2h5c1 0 2 .5 2 2V13z" />
          </S>
          Lakshmi supr...
          <Caret $s={4} $c="#111" />
        </StatusCell>
        <StatusCell $w={27} />
        <StatusCell $w={27} />
        <StatusCell $w={47} />
        <StatusCell $w={139} $pl={8}>
          <svg width="126" height="12" viewBox="0 0 126 12" fill="#555">
            <path d="M0 3h1.300v7H0zM7 3v7L2 6.500zM22 3v7l-4-3.500zM33 3v7l4-3.500zM48 3v7l5-3.500zM53.700 3H55v7h-1.300z" />
            <g fill="#bcbcbc">
              <path d="M71 1h3v3h-3zM75 1h3v3h-3zM79 1h3v3h-3zM71 5h3v3h-3zM75 5h3v3h-3zM79 5h3v3h-3zM71 9h3v3h-3zM75 9h3v3h-3zM79 9h3v3h-3z" />
              <path d="M92 1h11v7H92zM92 9h3v3h-3zM96 9h3v3h-3zM100 9h3v3h-3z" />
            </g>
            <path d="M113 1h11v11h-11z" />
          </svg>
        </StatusCell>
      </StatusBar>

      <Taskbar>
        <Weather>
          <CloudBox>
            <Cloud />
            <Count $top={-2} $left={11} $bg="#fb8f9c">5</Count>
          </CloudBox>
          <WeatherText><b>83°F</b><span>Cloudy</span></WeatherText>
        </Weather>
        <WinLogo />
        <SearchPill>
          <S w={15} h={16} sw={1.6}><circle cx="7" cy="6.500" r="5.300" /><path d="M10.800 10.500l4 4.800" /></S>
          Quick search
          <Pineapple />
        </SearchPill>
        <Apps>
          <AppSlot><TaskView /></AppSlot>
          <AppSlot><Copilot /></AppSlot>
          <AppSlot><Folder /></AppSlot>
          <AppSlot><Edge /></AppSlot>
          <AppSlot><Store /></AppSlot>
          <AppSlot><QuickApp /></AppSlot>
          <AppSlot $running><Wps /></AppSlot>
          <AppSlot><LinkedIn /><Count $top={6} $left={21} $px={3} $bg="#4cb8f5" $fs={14}>25</Count></AppSlot>
          <AppSlot $running><Chrome /><Count $top={6} $left={22} $bg="#0c0a0a" $fg="#666" $fs={9} /></AppSlot>
          <AppSlot $running><WhatsApp /><Count $top={6} $left={21} $px={3} $bg="#4cb8f5" $fs={14}>57</Count></AppSlot>
          <AppSlot $active $running><TableauApp /></AppSlot>
          <AppSlot $running><Chrome /><Count $top={6} $left={22} $bg="#c0390f" $fg="#fff" $fs={10}>L</Count></AppSlot>
          <AppSlot $running>
            <Telegram />
            <Count $top={10} $left={23} $bg="#ee3e3a" $fg="#fff" $fs={9} $square>.85</Count>
          </AppSlot>
        </Apps>
        <Tray>
          <S w={10} h={7} sw={1.6}><path d="M.5 6L5 1.200 9.500 6" /></S>
          <TrayIcon $gap={19}>
            <svg width="18" height="18" viewBox="0 0 18 18" fill="none" stroke="#eee" strokeWidth="1.500">
              <path d="M2 8a6.500 6.500 0 0 1 12-3.500M14.500 1v4h-4M2.500 16v-4H6M3 12.500c1 1.500 2 2.500 4 3" />
              <circle cx="13" cy="13" r="4.500" fill="#ff9d0a" stroke="none" />
            </svg>
          </TrayIcon>
          <TrayIcon $gap={14}><TrayText $w={28}>ENG<br />IN</TrayText></TrayIcon>
          <TrayIcon $gap={15}>
            <S w={17} h={14} sw={1.3}>
              <path d="M1 5a10.500 10.500 0 0 1 15 0M3.500 7.500a7 7 0 0 1 10 0M6 10a3.500 3.500 0 0 1 5 0" />
              <circle cx="8.500" cy="12" r="1" fill="#fff" />
            </S>
          </TrayIcon>
          <TrayIcon $gap={7}>
            <S w={17} h={14} sw={1.2}>
              <path d="M1 5h2.500L7 1.500v11L3.500 9H1zM9.500 5a3 3 0 0 1 0 4M11.500 3a5.500 5.500 0 0 1 0 8M13.500 1a8.500 8.500 0 0 1 0 12" />
            </S>
          </TrayIcon>
          <TrayIcon $gap={7}>
            <S w={17} h={14} sw={1.2}>
              <path d="M6 3.500h8v8H3.500V9M15.500 6v3" />
              <path d="M7 6h5v3.500H7z" fill="#fff" />
              <path d="M3.500 0L1 4.500h2L2 8l3.500-4.500h-2L5 0z" fill="#fff" strokeWidth=".4" />
            </S>
          </TrayIcon>
          <TrayIcon $gap={8}><TrayText $w={64} $align="right">8:17 AM<br />6/27/2025</TrayText></TrayIcon>
          <TrayIcon $gap={8}>
            <S w={14} h={15} sw={1.2}>
              <path d="M5 1.500C3 2 2.500 4 2.500 6v3L1 11.500h11L10.500 9V8M5 13.500c.8 1 2.500 1 3.200 0" />
              <path d="M5.500 4.500h3l-3 3.500h3M10 .8h3.500L10 4.500h3.500" strokeWidth="1" />
            </S>
          </TrayIcon>
        </Tray>
      </Taskbar>
    </Screen>
  );
}
